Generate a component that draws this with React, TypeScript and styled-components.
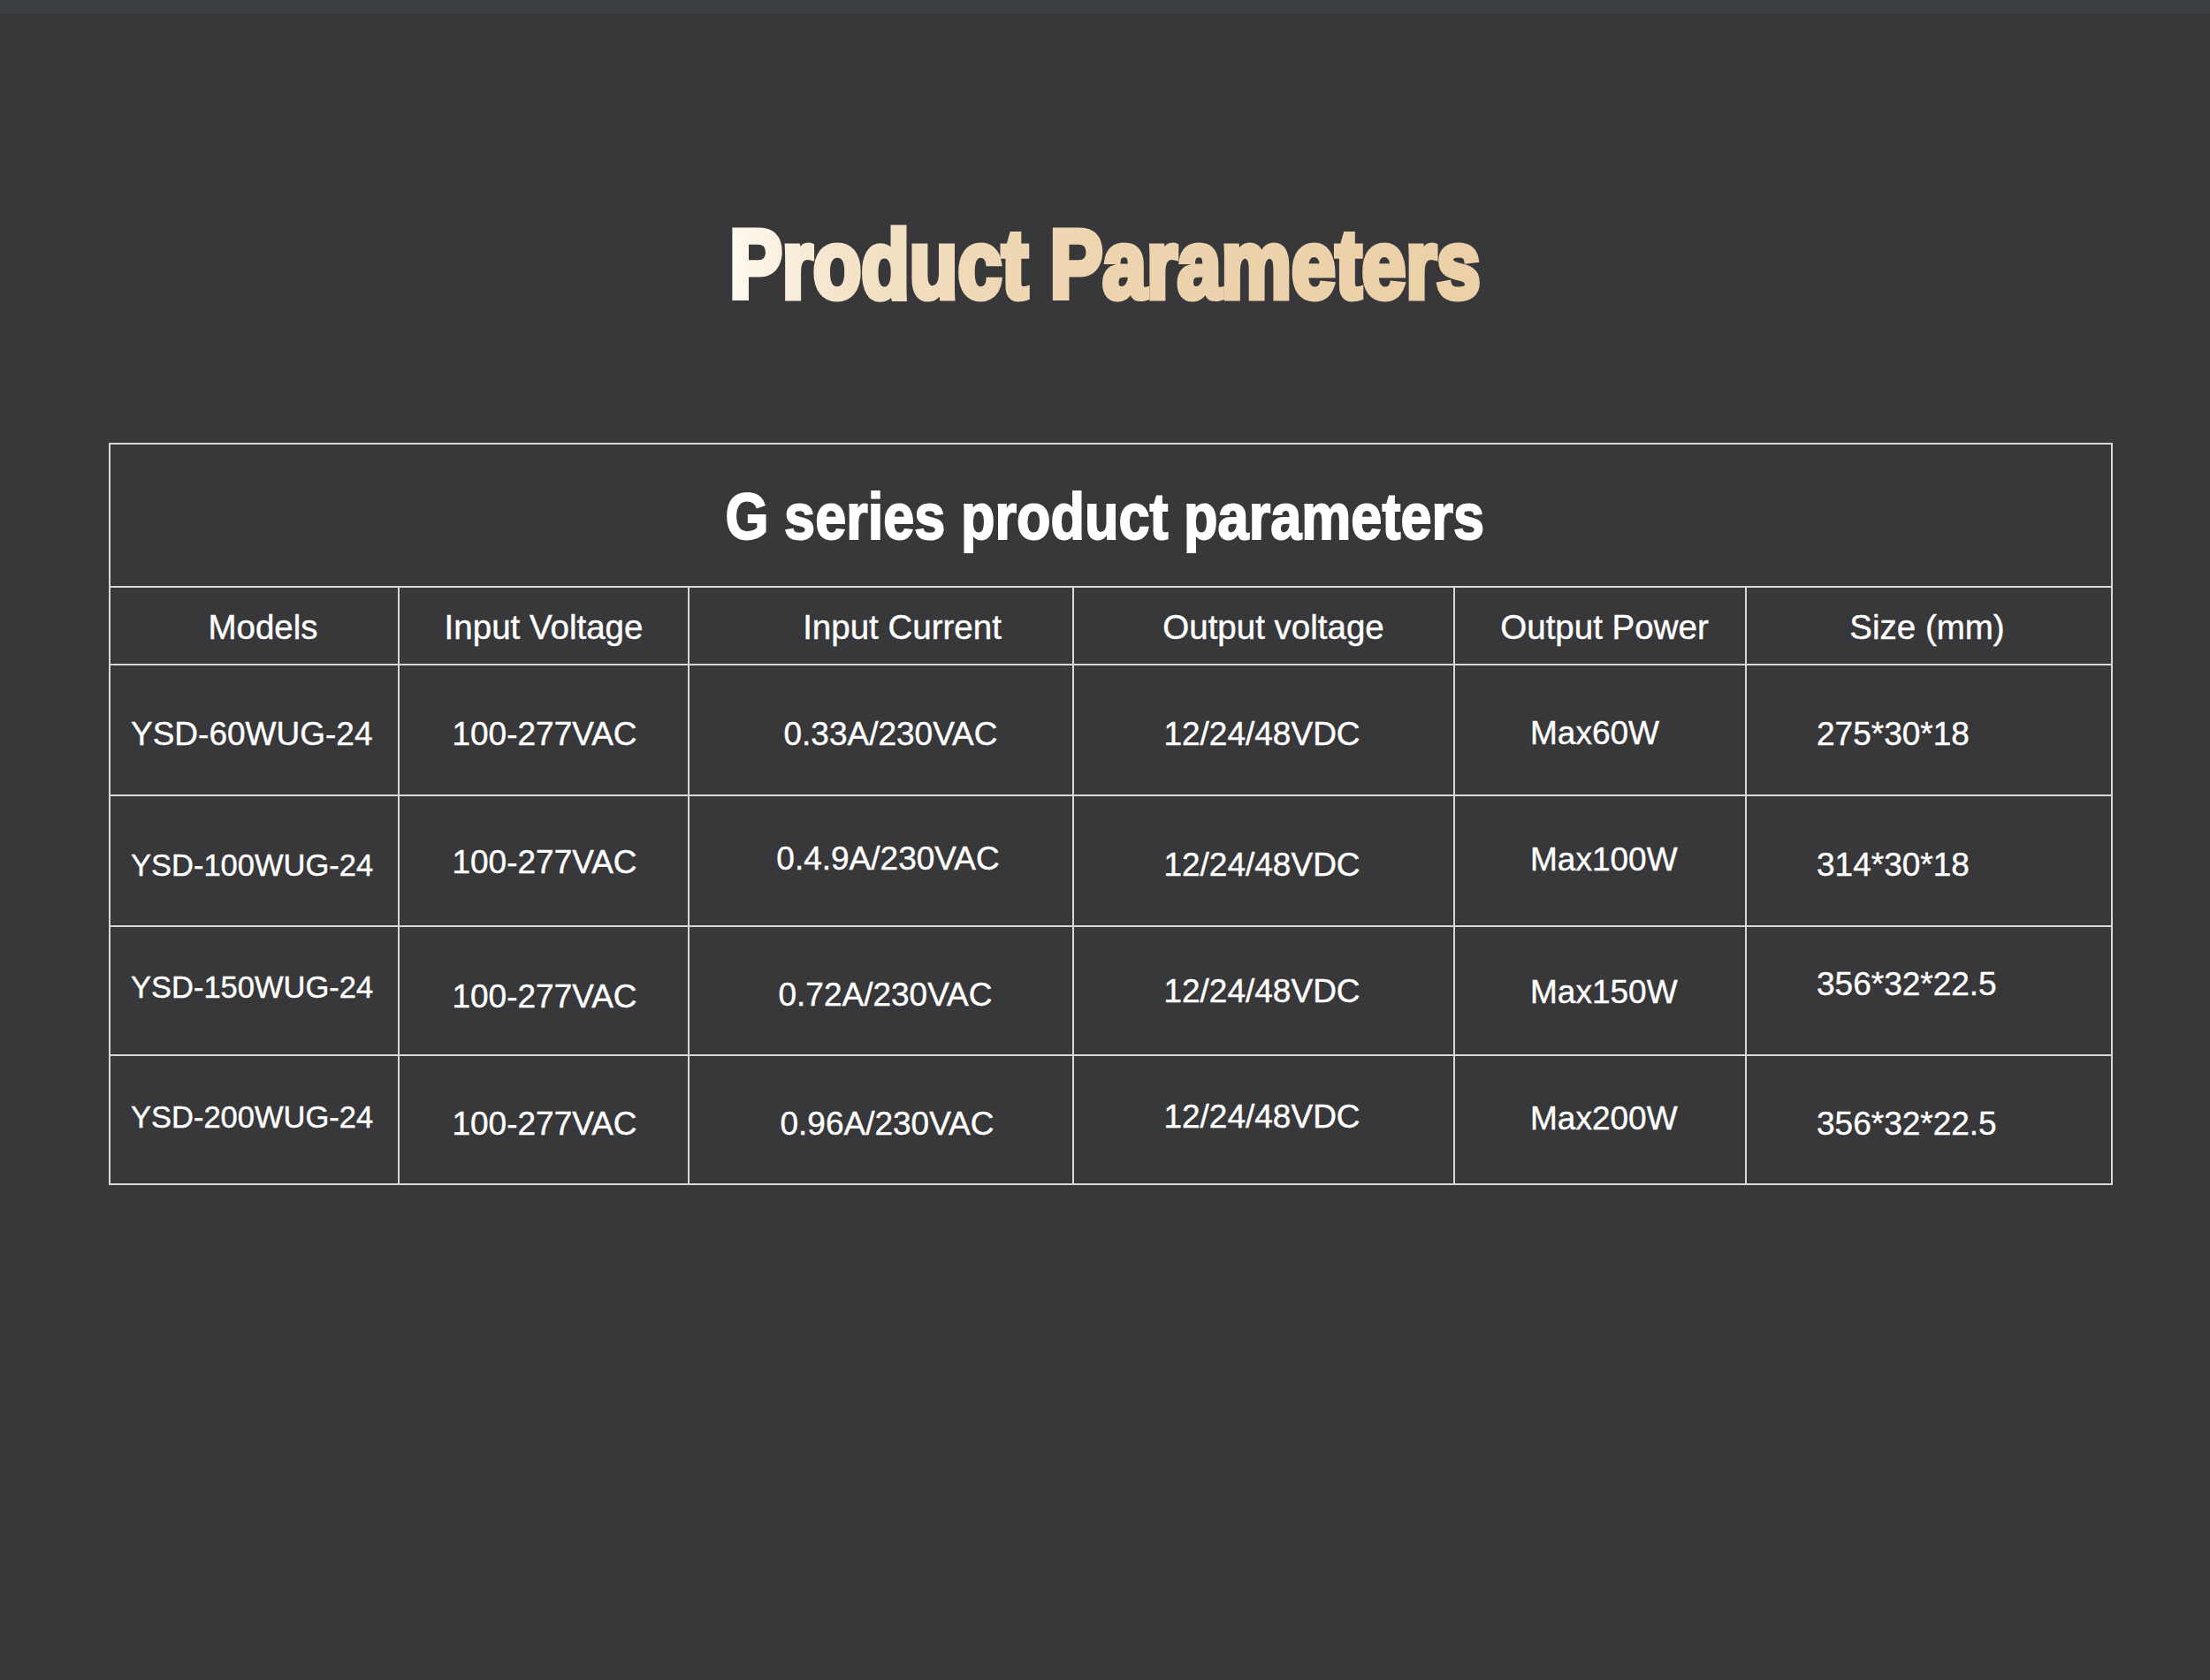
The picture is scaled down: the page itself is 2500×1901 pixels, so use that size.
import * as React from 'react';
import styled, {createGlobalStyle} from 'styled-components';

const GlobalStyle = createGlobalStyle`
  html, body {
    margin: 0;
    padding: 0;
    background: #38383b;
  }
  body {
    font-family: 'Liberation Sans', Arial, sans-serif;
    color: #ffffff;
  }
`;

const Page = styled.div`
  width: 2500px;
  min-height: 1901px;
  background: #38383b;
  display: flex;
  flex-direction: column;
`;

const TopStrip = styled.div`
  height: 16px;
  background: #3b3f43;
`;

const Heading = styled.div`
  margin-top: 229px;
  height: 109px;
  display: flex;
  justify-content: center;
`;

// gradient fill, thickened with a transparent stroke and squeezed to a condensed face
const HeadingText = styled.h1`
  margin: 0;
  padding: 0 4px;
  font-size: 109px;
  line-height: 1;
  font-weight: 700;
  white-space: nowrap;
  background: linear-gradient(
    90deg,
    #fffaf0 0%,
    #f4e3c8 16%,
    #efd8b5 34%,
    #edd3ad 60%,
    #ebd0a8 100%
  );
  -webkit-background-clip: text;
  background-clip: text;
  color: transparent;
  -webkit-text-fill-color: transparent;
  -webkit-text-stroke: 7px transparent;
  transform: scaleX(0.82);
`;

const Grid = styled.div`
  margin: 147px 0 0 123px;
  width: 2267px;
  box-sizing: border-box;
  display: grid;
  grid-template-columns: 325px 326px 433px 429px 328px 412px;
  grid-template-rows: 160px 86px 146px 146px 144px 144px;
  gap: 2px;
  padding: 2px;
  background: #d8d8d8;
`;

const Caption = styled.div`
  grid-column: 1 / -1;
  background: #38383b;
  display: flex;
  justify-content: center;
  align-items: flex-start;
  padding: 45px 14px 0 0;
  box-sizing: border-box;
`;

const CaptionText = styled.h2`
  margin: 0;
  font-size: 74px;
  line-height: 1;
  font-weight: 700;
  color: #ffffff;
  -webkit-text-stroke: 2px #ffffff;
  white-space: nowrap;
  transform: scaleX(0.852);
`;

type Align = 'center' | 'start';

interface CellProps {
  $align: Align;
  $pad: number;
  $dx: number;
  $dy: number;
  $size: number;
}

const Cell = styled.div<CellProps>`
  background: #38383b;
  display: flex;
  align-items: center;
  justify-content: ${(p) => (p.$align === 'start' ? 'flex-start' : 'center')};
  box-sizing: border-box;
  padding-left: ${(p) => (p.$align === 'start' ? p.$pad : Math.max(0, 2 * p.$dx))}px;
  padding-right: ${(p) => (p.$align === 'start' ? 0 : Math.max(0, -2 * p.$dx))}px;
  padding-top: ${(p) => Math.max(0, 2 * p.$dy)}px;
  padding-bottom: ${(p) => Math.max(0, -2 * p.$dy)}px;
  font-size: ${(p) => p.$size}px;
  line-height: 1;
  color: #ffffff;
  -webkit-text-stroke: 0.4px #ffffff;
  white-space: nowrap;
`;

const HeadCell = styled(Cell)`
  font-weight: 400;
`;

interface Column {
  align: Align;
  pad: number;
}

const columns: Column[] = [
  {align: 'start', pad: 23},
  {align: 'center', pad: 0},
  {align: 'center', pad: 0},
  {align: 'center', pad: 0},
  {align: 'start', pad: 85},
  {align: 'start', pad: 79},
];

interface Entry {
  text: string;
  dx?: number;
  dy?: number;
  size?: number;
}

const header: Entry[] = [
  {text: 'Models', dx: 10, dy: 2},
  {text: 'Input Voltage', dx: 0, dy: 2},
  {text: 'Input Current', dx: 24, dy: 2},
  {text: 'Output voltage', dx: 11, dy: 2},
  {text: 'Output Power', dx: 5, dy: 2},
  {text: 'Size (mm)', dx: -2, dy: 2},
];

const rows: Entry[][] = [
  [
    {text: 'YSD-60WUG-24', dy: 4},
    {text: '100-277VAC', dx: 1, dy: 4},
    {text: '0.33A/230VAC', dx: 11, dy: 4},
    {text: '12/24/48VDC', dx: -2, dy: 4},
    {text: 'Max60W', dy: 3},
    {text: '275*30*18', dy: 4},
  ],
  [
    {text: 'YSD-100WUG-24', dy: 5, size: 34.5},
    {text: '100-277VAC', dx: 1, dy: 1},
    {text: '0.4.9A/230VAC', dx: 8, dy: -3},
    {text: '12/24/48VDC', dx: -2, dy: 4},
    {text: 'Max100W', dy: -2},
    {text: '314*30*18', dy: 4},
  ],
  [
    {text: 'YSD-150WUG-24', dy: -4, size: 34.5},
    {text: '100-277VAC', dx: 1, dy: 6},
    {text: '0.72A/230VAC', dx: 5, dy: 4},
    {text: '12/24/48VDC', dx: -2, dy: 0},
    {text: 'Max150W', dy: 1},
    {text: '356*32*22.5', dy: -8},
  ],
  [
    {text: 'YSD-200WUG-24', dy: -3, size: 34.5},
    {text: '100-277VAC', dx: 1, dy: 4},
    {text: '0.96A/230VAC', dx: 7, dy: 4},
    {text: '12/24/48VDC', dx: -2, dy: -4},
    {text: 'Max200W', dy: -2},
    {text: '356*32*22.5', dy: 4},
  ],
];

export default function App(): JSX.Element {
  return (
    <Page>
      <GlobalStyle />
      <TopStrip />
      <Heading>
        <HeadingText>Product Parameters</HeadingText>
      </Heading>
      <Grid>
        <Caption>
          <CaptionText>G series product parameters</CaptionText>
        </Caption>
        {header.map((h) => (
          <HeadCell
            key={h.text}
            $align="center"
            $pad={0}
            $dx={h.dx ?? 0}
            $dy={h.dy ?? 0}
            $size={38.5}
          >
            {h.text}
          </HeadCell>
        ))}
        {rows.map((row, r) =>
          row.map((c, i) => (
            <Cell
              key={`${r}-${i}`}
              $align={columns[i].align}
              $pad={columns[i].pad}
              $dx={c.dx ?? 0}
              $dy={c.dy ?? 0}
              $size={c.size ?? 37}
            >
              {c.text}
            </Cell>
          )),
        )}
      </Grid>
    </Page>
  );
}
